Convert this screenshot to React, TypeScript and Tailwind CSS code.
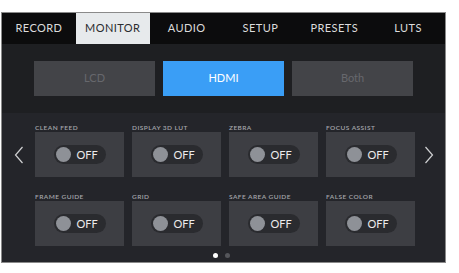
import React from "react";

const tabs = ["RECORD", "MONITOR", "AUDIO", "SETUP", "PRESETS", "LUTS"];
const outputs = ["LCD", "HDMI", "Both"];
const rows = [
  ["CLEAN FEED", "DISPLAY 3D LUT", "ZEBRA", "FOCUS ASSIST"],
  ["FRAME GUIDE", "GRID", "SAFE AREA GUIDE", "FALSE COLOR"],
];

const Toggle: React.FC<{ label: string }> = ({ label }) => {
  return (
    <div className="flex flex-col">
      <div className="h-[9px] text-[6.5px] leading-[9px] tracking-[0.07em] text-[#a4a6aa] font-semibold whitespace-nowrap">
        {label}
      </div>
      <div className="h-[45px] bg-[#3d3e43] flex items-center justify-center">
        <div className="w-[52px] h-[19px] rounded-full bg-[#2a2b2f] flex items-center pl-[2px]">
          <div className="w-[15px] h-[15px] rounded-full bg-[#8e9197]" />
          <span className="ml-[6px] text-[11px] leading-none text-[#ececec]">OFF</span>
        </div>
      </div>
    </div>
  );
};

const Chevron: React.FC<{ dir: "left" | "right" }> = ({ dir }) => (
  <svg width="10" height="18" viewBox="0 0 10 18" fill="none">
    <path
      d={dir === "left" ? "M8.5 1 L1.5 9 L8.5 17" : "M1.5 1 L8.5 9 L1.5 17"}
      stroke="#cfd0d2"
      strokeWidth="1.2"
    />
  </svg>
);

export default function App() {
  return (
    <div
      className="w-[459px] h-[273px] bg-white pt-[12px] pl-[1px]"
      style={{ fontFamily: "Lato, 'Open Sans', sans-serif" }}
    >
      <div className="w-[445px] h-[251px] border border-[#8a8a8a] bg-[#1e1f22] flex flex-col overflow-hidden">
        <div className="h-[31px] grid grid-cols-6 bg-[#0c0c0d]">
          {tabs.map((t) => (
            <div
              key={t}
              className={`flex items-center justify-center text-[11px] tracking-[0.04em] ${
                t === "MONITOR" ? "bg-[#e7eaec] text-[#2a2b2e]" : "text-[#dcdcdc]"
              }`}
            >
              {t}
            </div>
          ))}
        </div>

        <div className="h-[69px] flex items-center justify-center gap-[8px] pb-[1px]">
          {outputs.map((o) => (
            <div
              key={o}
              className={`w-[121px] h-[35px] flex items-center justify-center text-[11px] ${
                o === "HDMI" ? "bg-[#3a9ef6] text-white" : "bg-[#434448] text-[#67686d]"
              }`}
            >
              {o}
            </div>
          ))}
        </div>

        <div className="flex-1 bg-[#24252a] flex flex-col pt-[10px]">
          <div className="flex">
            <div className="w-[33px] flex flex-col">
              <div className="h-[9px]" />
              <div className="h-[45px] flex items-center justify-center pl-[1px]">
                <Chevron dir="left" />
              </div>
            </div>
            <div className="grid grid-cols-4 gap-x-[8px] gap-y-[15px] w-[380px]">
              {rows.flat().map((l) => (
                <Toggle key={l} label={l} />
              ))}
            </div>
            <div className="flex-1 flex flex-col">
              <div className="h-[9px]" />
              <div className="h-[45px] flex items-center justify-center pr-[2px]">
                <Chevron dir="right" />
              </div>
            </div>
          </div>
          <div className="flex justify-center gap-[7px] mt-[7px] pr-[4px]">
            <div className="w-[5px] h-[5px] rounded-full bg-white" />
            <div className="w-[5px] h-[5px] rounded-full bg-[#55565b]" />
          </div>
        </div>
      </div>
    </div>
  );
}
